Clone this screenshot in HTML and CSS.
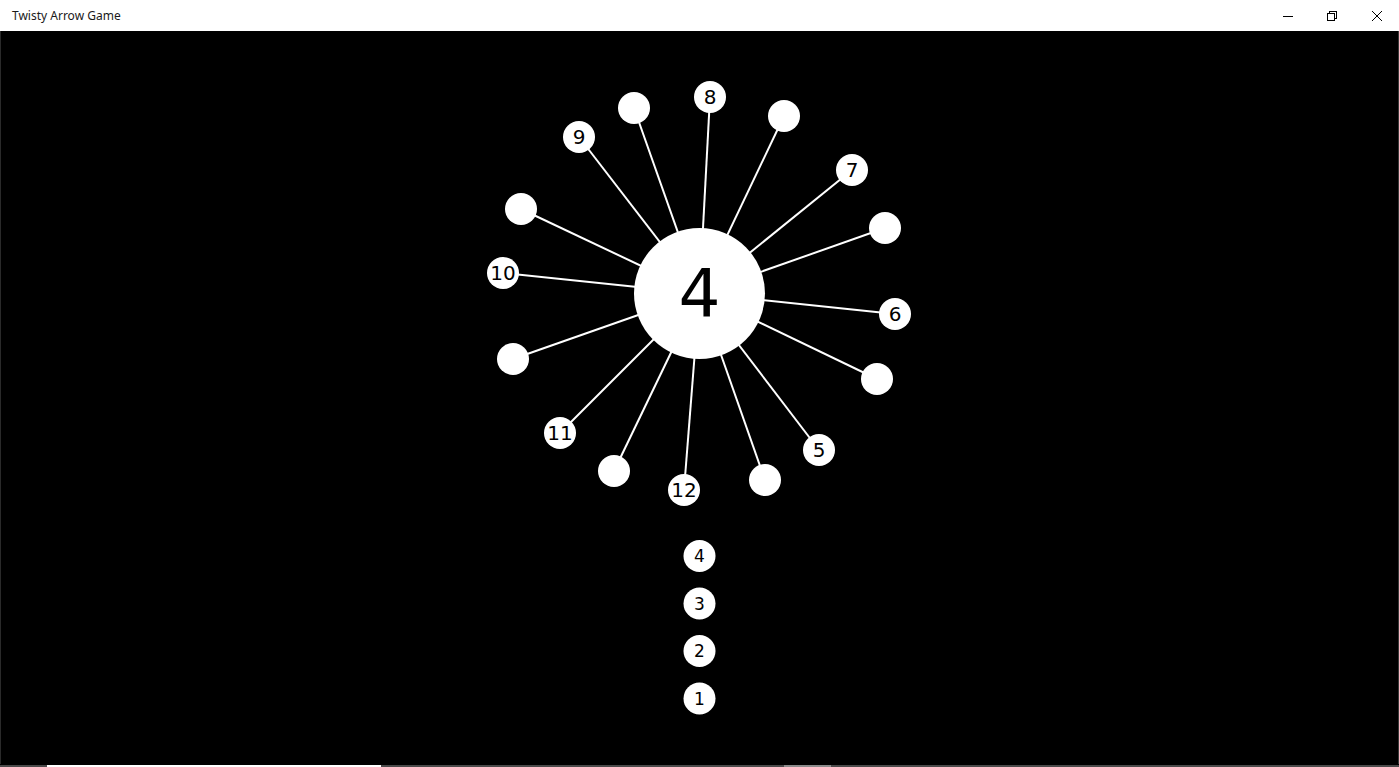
FILE: index.html
```html
<!DOCTYPE html>
<html lang="en">
<head>
<meta charset="utf-8">
<title>Twisty Arrow Game</title>
<link rel="stylesheet" href="styles.css">
</head>
<body>
<div class="window">
  <header class="titlebar">
    <span class="title">Twisty Arrow Game</span>
    <div class="controls">
      <button class="ctl" aria-label="Minimize">
        <svg width="10" height="10" viewBox="0 0 10 10"><path d="M0 5.5h10" stroke="#000" stroke-width="1" fill="none"/></svg>
      </button>
      <button class="ctl" aria-label="Restore">
        <svg width="10" height="10" viewBox="0 0 10 10"><path d="M0.5 2.5h7v7h-7z M2.5 2.5v-2h7v7h-2" stroke="#000" stroke-width="1" fill="none"/></svg>
      </button>
      <button class="ctl" aria-label="Close">
        <svg width="10" height="10" viewBox="0 0 10 10"><path d="M0 0L10 10M10 0L0 10" stroke="#000" stroke-width="1" fill="none"/></svg>
      </button>
    </div>
  </header>

  <main class="stage">
    <svg class="board" viewBox="1 31 1397 733" width="1397" height="733">
      <g class="spokes" stroke="#fff" stroke-width="2">
        <line x1="699.5" y1="293.5" x2="710" y2="97"/>
        <line x1="699.5" y1="293.5" x2="634" y2="108"/>
        <line x1="699.5" y1="293.5" x2="784" y2="116"/>
        <line x1="699.5" y1="293.5" x2="579" y2="137"/>
        <line x1="699.5" y1="293.5" x2="852" y2="170"/>
        <line x1="699.5" y1="293.5" x2="521" y2="209"/>
        <line x1="699.5" y1="293.5" x2="885" y2="228"/>
        <line x1="699.5" y1="293.5" x2="503" y2="273"/>
        <line x1="699.5" y1="293.5" x2="895" y2="314"/>
        <line x1="699.5" y1="293.5" x2="513" y2="359"/>
        <line x1="699.5" y1="293.5" x2="877" y2="379"/>
        <line x1="699.5" y1="293.5" x2="560" y2="433"/>
        <line x1="699.5" y1="293.5" x2="819" y2="450"/>
        <line x1="699.5" y1="293.5" x2="614" y2="471"/>
        <line x1="699.5" y1="293.5" x2="684" y2="490"/>
        <line x1="699.5" y1="293.5" x2="765" y2="480"/>
      </g>

      <circle class="hub" cx="699.5" cy="293.5" r="65.5"/>
      <text class="hub-num" x="699.5" y="293.5">4</text>

      <g class="pins">
        <circle cx="634" cy="108" r="16"/>
        <circle cx="784" cy="116" r="16"/>
        <circle cx="521" cy="209" r="16"/>
        <circle cx="885" cy="228" r="16"/>
        <circle cx="513" cy="359" r="16"/>
        <circle cx="877" cy="379" r="16"/>
        <circle cx="614" cy="471" r="16"/>
        <circle cx="765" cy="480" r="16"/>

        <circle cx="710" cy="97" r="16"/>
        <circle cx="579" cy="137" r="16"/>
        <circle cx="852" cy="170" r="16"/>
        <circle cx="503" cy="273" r="16"/>
        <circle cx="895" cy="314" r="16"/>
        <circle cx="560" cy="433" r="16"/>
        <circle cx="819" cy="450" r="16"/>
        <circle cx="684" cy="490" r="16"/>
      </g>
      <g class="pin-nums">
        <text x="710" y="97">8</text>
        <text x="579" y="137">9</text>
        <text x="852" y="170">7</text>
        <text x="503" y="273">10</text>
        <text x="895" y="314">6</text>
        <text x="560" y="433">11</text>
        <text x="819" y="450">5</text>
        <text x="684" y="490">12</text>
      </g>

      <g class="queue">
        <circle cx="699.5" cy="556" r="16"/>
        <circle cx="699.5" cy="603.5" r="16"/>
        <circle cx="699.5" cy="651" r="16"/>
        <circle cx="699.5" cy="698.5" r="16"/>
      </g>
      <g class="queue-nums">
        <text x="699.5" y="556">4</text>
        <text x="699.5" y="603.5">3</text>
        <text x="699.5" y="651">2</text>
        <text x="699.5" y="698.5">1</text>
      </g>
    </svg>
  </main>

  <footer class="edge">
    <span class="edge-gap edge-a"></span>
    <span class="edge-seg edge-white"></span>
    <span class="edge-gap edge-b"></span>
    <span class="edge-seg edge-grey"></span>
    <span class="edge-gap edge-c"></span>
  </footer>
</div>
</body>
</html>
```

FILE: styles.css
```css
* {
  box-sizing: border-box;
}

html, body {
  margin: 0;
  padding: 0;
  background: #000;
}

.window {
  width: 1399px;
  height: 767px;
  display: flex;
  flex-direction: column;
  overflow: hidden;
}

.titlebar {
  height: 31px;
  flex: 0 0 31px;
  background: #fff;
  display: flex;
  align-items: center;
  justify-content: space-between;
  padding-left: 12px;
}

.title {
  font-family: "Noto Sans", "Open Sans", sans-serif;
  font-size: 12px;
  color: #1a1a1a;
  line-height: 1;
}

.controls {
  display: flex;
  height: 100%;
}

.ctl {
  width: 44.5px;
  height: 31px;
  border: 0;
  padding: 0;
  margin: 0;
  background: transparent;
  display: flex;
  align-items: center;
  justify-content: center;
}

.ctl svg {
  display: block;
  shape-rendering: crispEdges;
}

.stage {
  flex: 1 1 auto;
  background: #000;
  border-left: 1px solid #2a2a2a;
  border-right: 1px solid #3a3a3a;
  display: flex;
}

.board {
  display: block;
}

.hub {
  fill: #fff;
}

.hub-num {
  fill: #000;
  font-family: "DejaVu Sans", Verdana, sans-serif;
  font-size: 66px;
  text-anchor: middle;
  dominant-baseline: central;
}

.pins circle,
.queue circle {
  fill: #fff;
}

.pin-nums text {
  fill: #000;
  font-family: "DejaVu Sans", Verdana, sans-serif;
  font-size: 20px;
  text-anchor: middle;
  dominant-baseline: central;
}

.queue-nums text {
  fill: #000;
  font-family: "DejaVu Sans", Verdana, sans-serif;
  font-size: 17px;
  text-anchor: middle;
  dominant-baseline: central;
}

.edge {
  flex: 0 0 3px;
  height: 3px;
  display: flex;
  align-items: flex-end;
  background: #000;
}

.edge-gap {
  height: 2px;
  background: #4a4a4a;
}

.edge-a { width: 47px; }
.edge-b { width: 403px; }
.edge-c { flex: 1 1 auto; }

.edge-seg {
  height: 2px;
}

.edge-white {
  width: 334px;
  background: #fff;
}

.edge-grey {
  width: 47px;
  background: #8a8a8a;
}
```
